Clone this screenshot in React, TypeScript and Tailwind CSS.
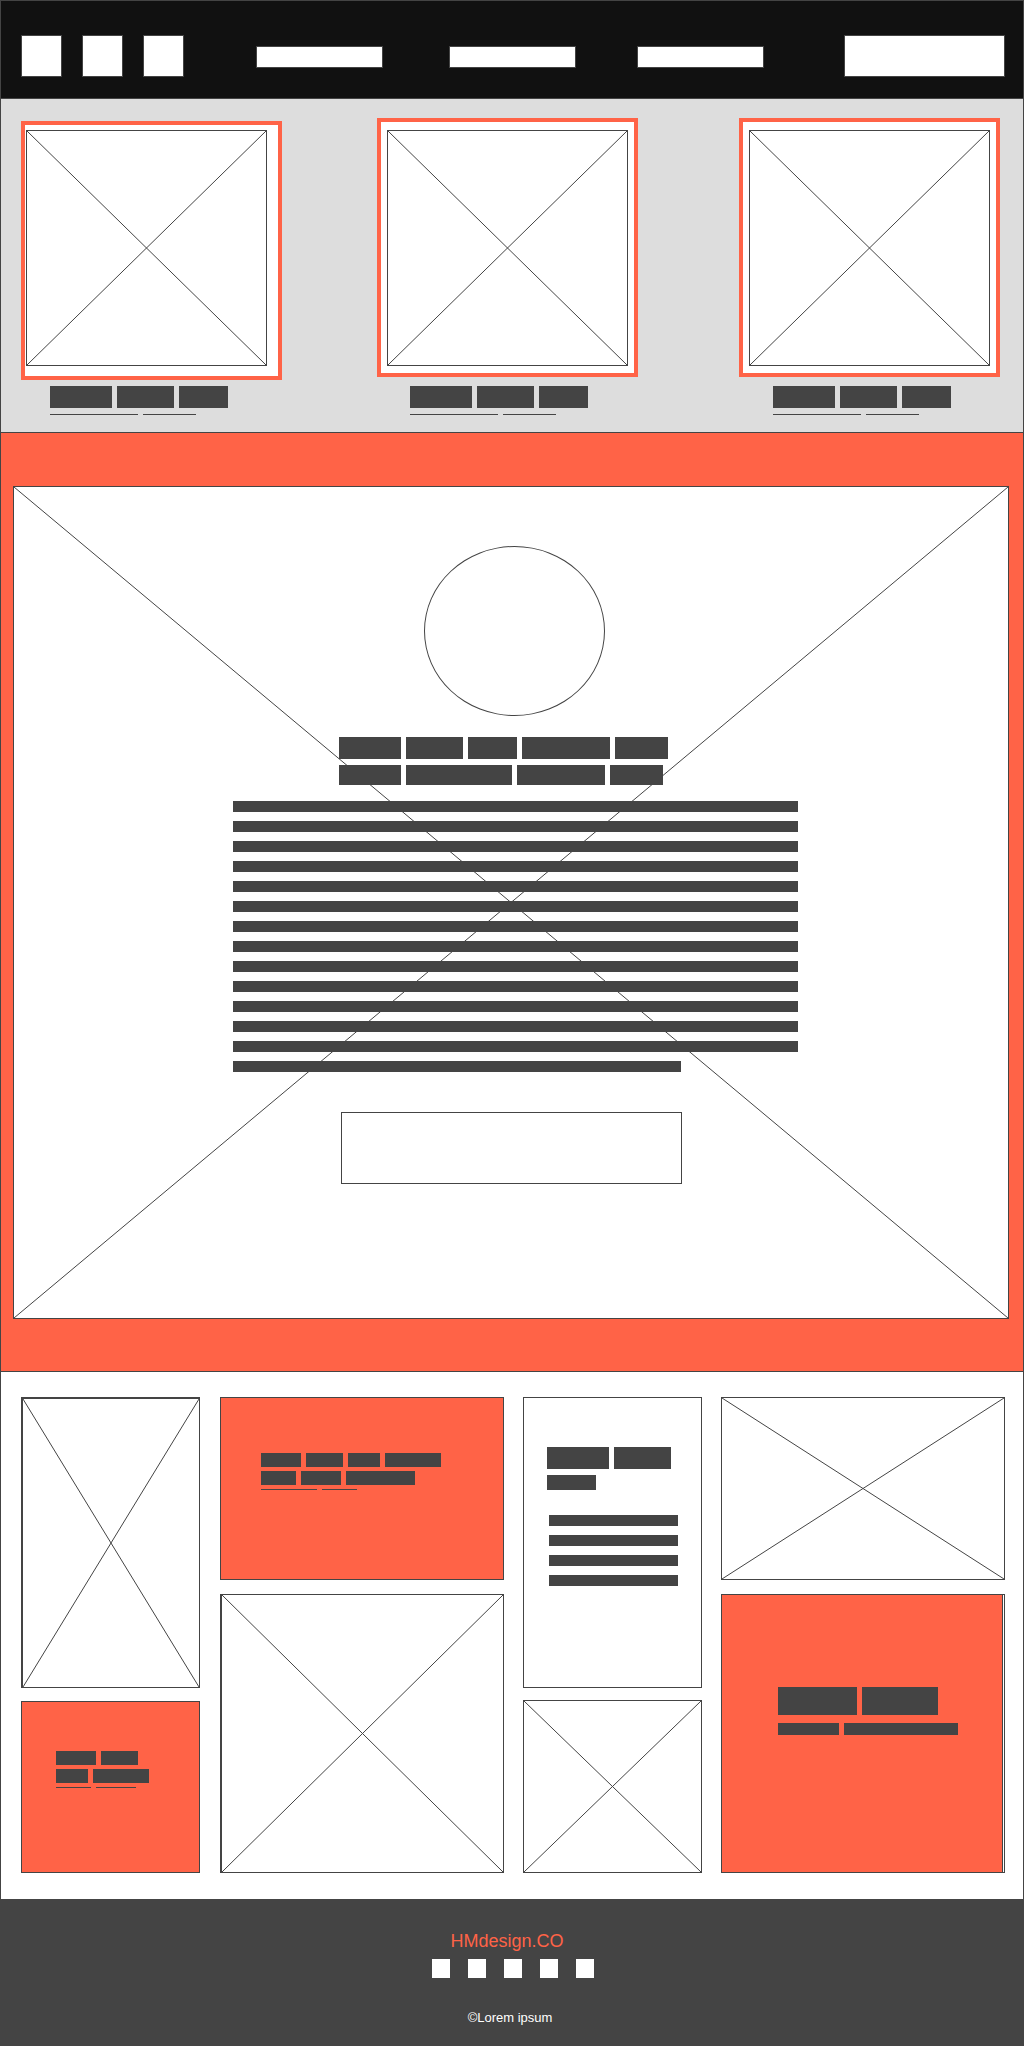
import type { ReactNode } from "react";

const INK = "border-[#444]";

function Cross() {
  return (
    <svg
      aria-hidden="true"
      className="absolute inset-0 size-full"
      viewBox="0 0 100 100"
      preserveAspectRatio="none"
      fill="none"
      stroke="#444"
    >
      <line x1="0" y1="0" x2="100" y2="100" vectorEffect="non-scaling-stroke" />
      <line x1="100" y1="0" x2="0" y2="100" vectorEffect="non-scaling-stroke" />
    </svg>
  );
}

function ImageBox({ className, children }: { className: string; children?: ReactNode }) {
  return (
    <div className={`relative bg-white ${INK} ${className}`}>
      <Cross />
      {children}
    </div>
  );
}

/* One line of placeholder words; widths are in pixels. */
function Words({ widths, className }: { widths: number[]; className: string }) {
  return (
    <div className={`flex gap-[5px] ${className}`}>
      {widths.map((w, i) => (
        <span key={i} className="h-full bg-[#444]" style={{ width: w }} />
      ))}
    </div>
  );
}

function Lines({ count, className }: { count: number; className?: string }) {
  return (
    <div className={`flex flex-col gap-[9px] ${className ?? ""}`}>
      {Array.from({ length: count }, (_, i) => (
        <span key={i} className="h-[11px] bg-[#444]" />
      ))}
    </div>
  );
}

function Header() {
  const link = "h-[22px] border border-[#444] bg-white";
  return (
    <header className="flex items-start border-y border-[#444] bg-[#111] pt-[34px] pr-[18px] pb-[21px] pl-5">
      <div className="flex gap-5">
        {["Home", "Profile", "Search"].map((name) => (
          <a key={name} href="#" aria-label={name} className="h-[42px] w-[41px] border border-[#444] bg-white" />
        ))}
      </div>
      <nav className="mt-[11px] mr-20 ml-[72px] grid flex-1 grid-cols-[127fr_66fr_127fr_61fr_127fr]">
        <a href="#" aria-label="Products" className={`col-start-1 ${link}`} />
        <a href="#" aria-label="Gallery" className={`col-start-3 ${link}`} />
        <a href="#" aria-label="About" className={`col-start-5 ${link}`} />
      </nav>
      <button type="button" aria-label="Contact" className="h-[42px] w-[161px] border border-[#444] bg-white" />
    </header>
  );
}

function Card({ className, frame, caption }: { className: string; frame: string; caption: string }) {
  return (
    <figure className={`flex flex-col ${className}`}>
      <div className={`border-4 border-[#ff6347] bg-white ${frame}`}>
        <ImageBox className="h-[236px] border" />
      </div>
      <figcaption className={`mt-auto ${caption}`}>
        <Words widths={[62, 57, 49]} className="h-[22px]" />
        <Words widths={[88, 53]} className="mt-[6px] h-px" />
      </figcaption>
    </figure>
  );
}

function Cards() {
  return (
    <section className="grid grid-cols-[261fr_95fr_261fr_101fr_261fr] border-b border-[#444] bg-[#ddd] pt-[19px] pr-[23px] pb-[17px] pl-5">
      <Card className="col-start-1 pt-[3px]" frame="mb-[6px] pt-[5px] pr-[11px] pb-[10px] pl-px" caption="pl-[29px]" />
      <Card className="col-start-3" frame="px-[6px] pt-2 pb-[7px]" caption="pl-[33px]" />
      <Card className="col-start-5" frame="px-[6px] pt-2 pb-[7px]" caption="pl-[34px]" />
    </section>
  );
}

function Hero() {
  return (
    <section className="border-b border-[#444] bg-[#ff6347] pt-[53px] pr-[14px] pb-[52px] pl-3">
      <ImageBox className="border pt-[59px] pb-[134px] pl-[9px]">
        <div className="relative mx-auto w-[565px]">
          <div className="ml-[191px] h-[170px] w-[181px] rounded-[50%] border border-[#444] bg-white" />
          <Words widths={[62, 57, 49, 88, 53]} className="mt-[21px] ml-[106px] h-[22px]" />
          <Words widths={[62, 106, 88, 53]} className="mt-[6px] ml-[106px] h-5" />
          <Lines count={13} className="mt-4" />
          <div className="mt-[9px] mr-[117px] h-[11px] bg-[#444]" />
          <button
            type="button"
            aria-label="Read more"
            className="mt-10 ml-[108px] block h-[72px] w-[341px] border border-[#444] bg-white"
          />
        </div>
      </ImageBox>
    </section>
  );
}

function Gallery() {
  const column = "flex flex-col";
  return (
    <section className="grid grid-cols-[179fr_20fr_284fr_19fr_179fr_19fr_284fr] bg-white pt-[25px] pr-[18px] pb-[26px] pl-5">
      <div className={`col-start-1 gap-[13px] ${column}`}>
        <ImageBox className="h-[291px] border border-t-2 border-l-2" />
        <div className="h-[172px] border border-[#444] bg-[#ff6347] pt-[49px] pl-[34px]">
          <Words widths={[40, 37]} className="h-[14px]" />
          <Words widths={[32, 56]} className="mt-1 h-[14px]" />
          <Words widths={[35, 40]} className="mt-1 h-px" />
        </div>
      </div>
      <div className={`col-start-3 gap-[14px] ${column}`}>
        <div className="h-[183px] border border-[#444] bg-[#ff6347] pt-[55px] pl-10">
          <Words widths={[40, 37, 32, 56]} className="h-[14px]" />
          <Words widths={[35, 40, 69]} className="mt-1 h-[14px]" />
          <Words widths={[56, 35]} className="mt-1 h-px" />
        </div>
        <ImageBox className="h-[279px] border border-l-2" />
      </div>
      <div className={`col-start-5 gap-3 ${column}`}>
        <div className="h-[291px] border border-[#444] bg-white pt-[49px] pr-[23px] pl-[23px]">
          <Words widths={[62, 57]} className="h-[22px]" />
          <Words widths={[49]} className="mt-[6px] h-[15px]" />
          <Lines count={4} className="mt-[25px] ml-[2px]" />
        </div>
        <ImageBox className="h-[173px] border" />
      </div>
      <div className={`col-start-7 gap-[14px] ${column}`}>
        <ImageBox className="h-[183px] border" />
        <div className="h-[279px] border border-[#444] bg-white pr-px">
          <div className="h-full border-r border-[#444] bg-[#ff6347] pt-[92px] pl-14">
            <Words widths={[79, 76]} className="h-7" />
            <Words widths={[61, 114]} className="mt-2 h-3" />
          </div>
        </div>
      </div>
    </section>
  );
}

function Footer() {
  return (
    <footer className="flex flex-col items-center bg-[#444] pt-8 pb-[18px]">
      <p className="pr-[10px] text-[18px] leading-5 text-[#ff6347]">HMdesign.CO</p>
      <div className="mt-2 flex gap-[18px] pl-[2px]">
        {["Facebook", "Instagram", "Twitter", "Pinterest", "YouTube"].map((name) => (
          <a key={name} href="#" aria-label={name} className="h-[19px] w-[18px] bg-white" />
        ))}
      </div>
      <p className="mt-[30px] pr-1 text-[13px] leading-5 text-white">©Lorem ipsum</p>
    </footer>
  );
}

export default function App() {
  return (
    <div className="min-h-screen bg-[#444] font-['Liberation_Sans',Arial,sans-serif]">
      <div className="border-x border-[#444]">
        <Header />
        <Cards />
        <Hero />
        <Gallery />
      </div>
      <Footer />
    </div>
  );
}
